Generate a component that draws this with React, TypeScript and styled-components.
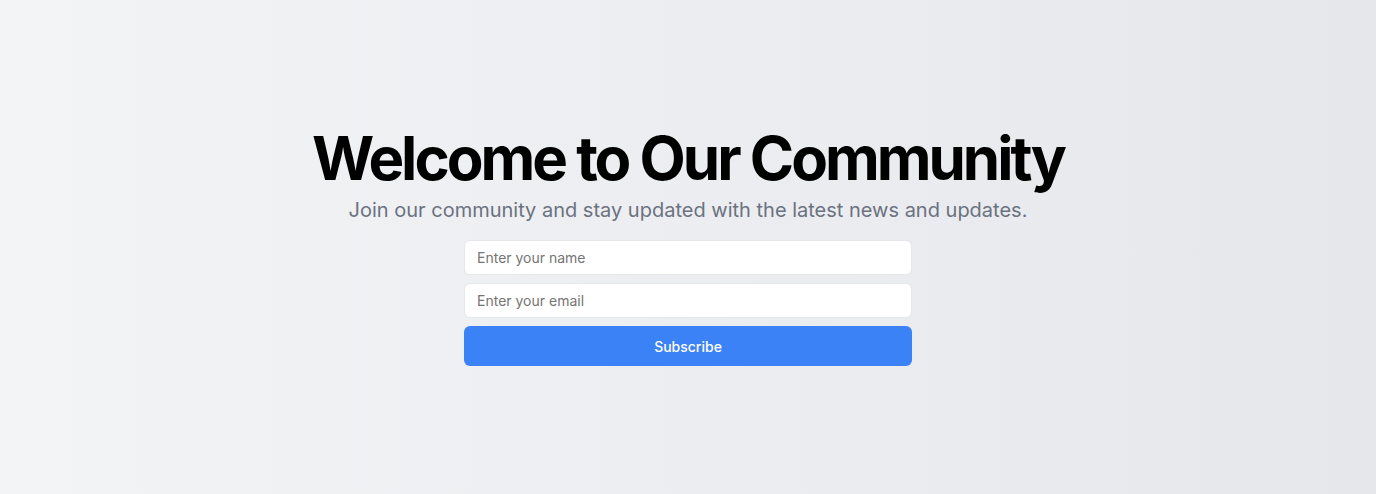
import React, { useState } from "react";
import styled, { createGlobalStyle } from "styled-components";

const GlobalStyle = createGlobalStyle`
    * {
        box-sizing: border-box;
    }

    body {
        margin: 0;
        font-family: Inter, "Liberation Sans", sans-serif;
    }
`;

const Page = styled.main`
    min-height: 100vh;
    display: flex;
    align-items: center;
    justify-content: center;
    background: linear-gradient(to right, #f3f4f6, #e5e7eb);
`;

const Content = styled.section`
    display: flex;
    flex-direction: column;
    align-items: center;
    text-align: center;
`;

const Title = styled.h1`
    margin: 0;
    font-size: 60px;
    line-height: 1;
    font-weight: 700;
    letter-spacing: -0.05em;
    color: #000;
`;

const Subtitle = styled.p`
    margin: 8px 0 0;
    font-size: 20px;
    line-height: 28px;
    color: #6b7280;
`;

const Form = styled.form`
    width: 448px;
    margin-top: 16px;
    display: flex;
    flex-direction: column;
    gap: 8px;
`;

const Input = styled.input`
    width: 100%;
    height: 35px;
    padding: 0 12px;
    border: 1px solid #e5e7eb;
    border-radius: 6px;
    background: #fff;
    font-family: inherit;
    font-size: 14px;
    color: #111827;
    outline: none;

    ::placeholder {
        color: #6b7280;
    }
`;

const Button = styled.button`
    height: 40px;
    border: none;
    border-radius: 6px;
    background: #3b82f6;
    color: #fff;
    font-family: inherit;
    font-size: 14px;
    font-weight: 500;
    cursor: pointer;
`;

const App: React.FC = () => {
    const [name, setName] = useState("");
    const [email, setEmail] = useState("");

    const onSubmit = (event: React.FormEvent<HTMLFormElement>) => {
        event.preventDefault();
    };

    return (
      <>
        <GlobalStyle />
        <Page>
          <Content>
            <Title>Welcome to Our Community</Title>
            <Subtitle>Join our community and stay updated with the latest news and updates.</Subtitle>
            <Form onSubmit={onSubmit}>
              <Input placeholder="Enter your name" value={name} onChange={(e) => setName(e.target.value)} />
              <Input placeholder="Enter your email" type="email" value={email} onChange={(e) => setEmail(e.target.value)} />
              <Button type="submit">Subscribe</Button>
            </Form>
          </Content>
        </Page>
      </>
    );
};

export default App;
